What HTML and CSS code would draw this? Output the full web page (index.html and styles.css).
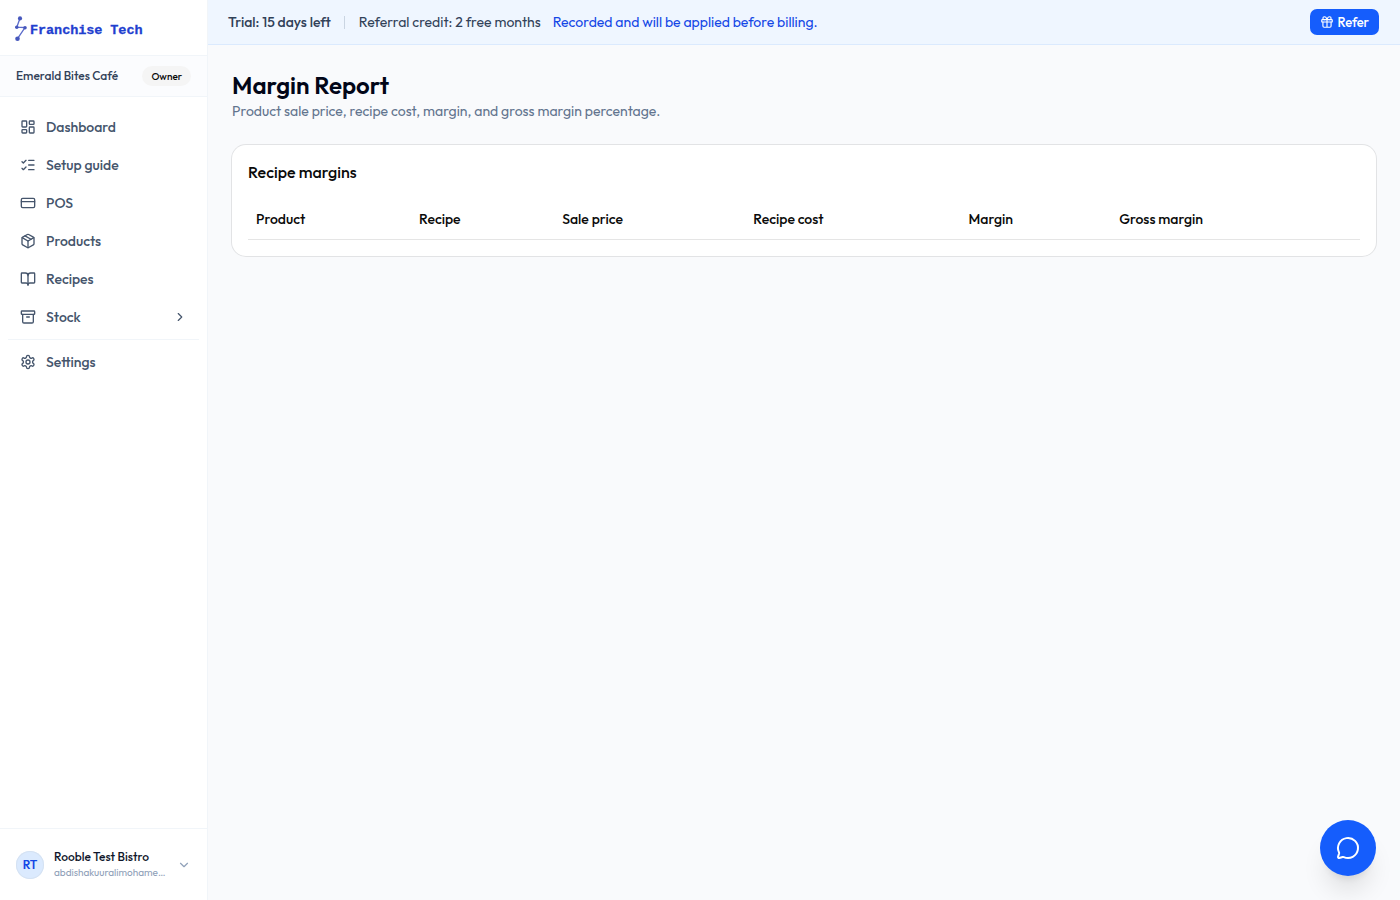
FILE: index.html
```html
<!DOCTYPE html>
<html lang="en">
<head>
  <meta charset="UTF-8" />
  <meta name="viewport" content="width=device-width, initial-scale=1.0"/>
  <title>Margin Report - Franchise Tech</title>
  <link rel="stylesheet" href="styles.css">
</head>
<body>

  <aside class="sidebar">
    <div class="brand">
      <svg class="brand-mark" viewBox="0 0 14 28">
        <path d="M6 3.2 2.8 12.200 11 12.700 3.500 23.700" fill="none" stroke="#5b6bca" stroke-width="1.3"/>
        <circle cx="6" cy="3.400" r="2.1"/>
        <circle cx="2.800" cy="12.200" r="1.8"/>
        <circle cx="11" cy="12.700" r="1.8"/>
        <circle cx="3.500" cy="23.700" r="2.3"/>
      </svg>
      <span class="brand-name">Franchise Tech</span>
    </div>

    <div class="branch">
      <span class="branch-name">Emerald Bites Café</span>
      <span class="badge">Owner</span>
    </div>

    <nav class="nav">
      <a href="#" class="nav-item">
        <svg class="icon" viewBox="0 0 24 24"><rect width="7" height="9" x="3" y="3" rx="1"/><rect width="7" height="5" x="14" y="3" rx="1"/><rect width="7" height="9" x="14" y="12" rx="1"/><rect width="7" height="5" x="3" y="16" rx="1"/></svg>
        <span>Dashboard</span>
      </a>
      <a href="#" class="nav-item">
        <svg class="icon" viewBox="0 0 24 24"><path d="M13 5h8M13 12h8M13 19h8M3 17l2 2 4-4M3 7l2 2 4-4"/></svg>
        <span>Setup guide</span>
      </a>
      <a href="#" class="nav-item">
        <svg class="icon" viewBox="0 0 24 24"><rect width="20" height="14" x="2" y="5" rx="2"/><path d="M2 10h20"/></svg>
        <span>POS</span>
      </a>
      <a href="#" class="nav-item">
        <svg class="icon" viewBox="0 0 24 24"><path d="M11 21.73a2 2 0 0 0 2 0l7-4A2 2 0 0 0 21 16V8a2 2 0 0 0-1-1.73l-7-4a2 2 0 0 0-2 0l-7 4A2 2 0 0 0 3 8v8a2 2 0 0 0 1 1.73z"/><path d="M12 22V12"/><path d="M3.29 7 12 12l8.71-5"/><path d="m7.5 4.27 9 5.15"/></svg>
        <span>Products</span>
      </a>
      <a href="#" class="nav-item">
        <svg class="icon" viewBox="0 0 24 24"><path d="M12 7v14"/><path d="M3 18a1 1 0 0 1-1-1V4a1 1 0 0 1 1-1h5a4 4 0 0 1 4 4 4 4 0 0 1 4-4h5a1 1 0 0 1 1 1v13a1 1 0 0 1-1 1h-6a3 3 0 0 0-3 3 3 3 0 0 0-3-3z"/></svg>
        <span>Recipes</span>
      </a>
      <a href="#" class="nav-item">
        <svg class="icon" viewBox="0 0 24 24"><rect width="20" height="5" x="2" y="3" rx="1"/><path d="M4 8v11a2 2 0 0 0 2 2h12a2 2 0 0 0 2-2V8"/><path d="M10 12h4"/></svg>
        <span>Stock</span>
        <svg class="icon chevron" viewBox="0 0 24 24"><path d="m9 18 6-6-6-6"/></svg>
      </a>
      <hr class="nav-divider">
      <a href="#" class="nav-item">
        <svg class="icon" viewBox="0 0 24 24"><path d="M12.22 2h-.44a2 2 0 0 0-2 2v.18a2 2 0 0 1-1 1.73l-.43.25a2 2 0 0 1-2 0l-.15-.08a2 2 0 0 0-2.73.73l-.22.38a2 2 0 0 0 .73 2.73l.15.1a2 2 0 0 1 1 1.72v.51a2 2 0 0 1-1 1.74l-.15.09a2 2 0 0 0-.73 2.73l.22.38a2 2 0 0 0 2.73.73l.15-.08a2 2 0 0 1 2 0l.43.25a2 2 0 0 1 1 1.73V20a2 2 0 0 0 2 2h.44a2 2 0 0 0 2-2v-.18a2 2 0 0 1 1-1.73l.43-.25a2 2 0 0 1 2 0l.15.08a2 2 0 0 0 2.73-.73l.22-.39a2 2 0 0 0-.73-2.73l-.15-.08a2 2 0 0 1-1-1.74v-.5a2 2 0 0 1 1-1.74l.15-.09a2 2 0 0 0 .73-2.73l-.22-.38a2 2 0 0 0-2.73-.73l-.15.08a2 2 0 0 1-2 0l-.43-.25a2 2 0 0 1-1-1.73V4a2 2 0 0 0-2-2z"/><circle cx="12" cy="12" r="3"/></svg>
        <span>Settings</span>
      </a>
    </nav>

    <div class="account">
      <span class="avatar">RT</span>
      <div class="account-text">
        <div class="account-name">Rooble Test Bistro</div>
        <div class="account-mail">abdishakuuralimohame…</div>
      </div>
      <svg class="icon account-chevron" viewBox="0 0 24 24"><path d="m6 9 6 6 6-6"/></svg>
    </div>
  </aside>

  <div class="page">
    <div class="trial-bar">
      <strong class="trial-days">Trial: 15 days left</strong>
      <span class="trial-sep"></span>
      <span class="trial-credit">Referral credit: 2 free months</span>
      <span class="trial-note">Recorded and will be applied before billing.</span>
      <button type="button" class="refer-btn">
        <svg class="icon" viewBox="0 0 24 24"><rect x="3" y="8" width="18" height="4" rx="1"/><path d="M12 8v13M19 12v7a2 2 0 0 1-2 2H7a2 2 0 0 1-2-2v-7M7.5 8a2.5 2.5 0 0 1 0-5A4.8 8 0 0 1 12 8a4.8 8 0 0 1 4.500-5 2.5 2.5 0 0 1 0 5"/></svg>
        <span>Refer</span>
      </button>
    </div>

    <main class="content">
      <h1>Margin Report</h1>
      <p class="subtitle">Product sale price, recipe cost, margin, and gross margin percentage.</p>

      <section class="card">
        <h2>Recipe margins</h2>
        <table class="margins">
          <thead>
            <tr>
              <th class="col-product">Product</th>
              <th class="col-recipe">Recipe</th>
              <th class="col-price">Sale price</th>
              <th class="col-cost">Recipe cost</th>
              <th class="col-margin">Margin</th>
              <th class="col-gross">Gross margin</th>
            </tr>
          </thead>
          <tbody></tbody>
        </table>
      </section>
    </main>
  </div>

  <button type="button" class="chat-btn" aria-label="Chat">
    <svg class="icon" viewBox="0 0 24 24"><path d="M2.992 16.342a2 2 0 0 1 .094 1.167l-1.065 3.290a1 1 0 0 0 1.236 1.168l3.413-.998a2 2 0 0 1 1.099.092 10 10 0 1 0-4.777-4.719"/></svg>
  </button>

</body>
</html>
```
FILE: styles.css
```css
:root {
  --bg: #f9fafc;
  --line: #f1f5f9;
  --blue: #155dfc;
  --blue-dark: #1447e6;
  --slate: #45556c;
  --muted: #62748e;
  --text: #0a0a0a;
}
* { box-sizing: border-box; margin: 0; padding: 0; }
body {
  display: flex; height: 100vh;
  background: var(--bg); color: var(--text);
  font-family: Outfit, Lato, sans-serif; font-size: 14px; line-height: 20px;
  white-space: nowrap; overflow: hidden;
}
button { border: none; font-family: inherit; cursor: pointer; }
.icon {
  width: 16px; height: 16px; flex: none; overflow: visible;
  fill: none; stroke: currentColor; stroke-width: 2;
  stroke-linecap: round; stroke-linejoin: round;
}

/* sidebar */
.sidebar {
  width: 208px; flex: none; display: flex; flex-direction: column;
  background: #fff; border-right: 1px solid var(--line);
}
.brand {
  display: flex; align-items: center; height: 56px; padding: 2px 0 0 14px;
  border-bottom: 1px solid var(--line);
}
.brand-mark { width: 14px; height: 28px; fill: #4657bd; }
.brand-name {
  margin: 3px 0 0 2px; color: #1f40cf;
  font: bold 13.5px "Liberation Mono", monospace;
  letter-spacing: -.07px; -webkit-text-stroke: .3px #1f40cf;
}
.branch {
  display: flex; align-items: center; justify-content: space-between;
  height: 41px; padding: 0 16px; background: #fbfcfe;
  border-bottom: 1px solid var(--line);
}
.branch-name { color: #314158; font-size: 12px; font-weight: 500; }
.badge {
  height: 20px; padding: 1px 9px 0; border-radius: 10px;
  background: #f5f5f5; font-size: 10px; font-weight: 500; line-height: 20px;
}
.nav { flex: 1; display: flex; flex-direction: column; gap: 2px; padding: 12px 8px; }
.nav-item {
  display: flex; align-items: center; gap: 10px; height: 36px; padding: 0 12px;
  color: var(--slate); font-weight: 500; text-decoration: none;
}
.chevron { width: 14px; height: 14px; margin-left: auto; }
.nav-divider { margin: 2px 0; border: none; border-top: 1px solid var(--line); }
.account {
  display: flex; align-items: center; height: 72px; padding: 0 16px;
  border-top: 1px solid var(--line);
}
.avatar {
  width: 28px; height: 28px; flex: none; border-radius: 50%;
  background: #dbeafe; box-shadow: inset 0 0 0 1px #d5e2f2;
  color: var(--blue-dark); font-size: 12px; font-weight: 600; line-height: 28px; text-align: center;
}
.account-text { flex: 1; margin-left: 10px; }
.account-name { color: #0f172b; font-size: 12px; font-weight: 500; line-height: 16px; }
.account-mail { color: #90a1b9; font-size: 10px; line-height: 15px; }
.account-chevron { width: 14px; height: 14px; color: #90a1b9; }

/* top bar */
.page { flex: 1; }
.trial-bar {
  display: flex; align-items: center; height: 45px; padding: 0 21px 1px 20px;
  background: #eff6ff; border-bottom: 1px solid #dbeafe; color: #314158;
}
.trial-days { font-weight: 500; }
.trial-sep { width: 1px; height: 13px; margin: 2px 14px 0 13px; background: #cad5e2; }
.trial-note { margin-left: 12px; color: var(--blue-dark); }
.refer-btn {
  display: flex; align-items: center; gap: 4px; height: 26px; margin-left: auto; padding: 1px 10px 0;
  background: var(--blue); border-radius: 7px; color: #fff; font-size: 13px; font-weight: 500;
}
.refer-btn .icon { width: 14px; height: 14px; margin-top: -1px; }
.refer-btn span { letter-spacing: -.1px; }

/* report */
.content { padding: 24px; }
h1 { height: 32px; color: #020618; font-size: 24px; font-weight: 600; line-height: 32px; }
.subtitle { color: var(--muted); }
.card {
  margin-top: 24px; padding: 16px; border-radius: 14px;
  background: #fff; box-shadow: 0 0 0 1px #e2e3e5;
}
h2 { font-size: 16px; font-weight: 500; line-height: 22px; }
.margins { width: 100%; margin-top: 16px; border-collapse: separate; border-spacing: 0; table-layout: fixed; }
.margins th {
  height: 41px; padding: 0 8px; border-bottom: 1px solid #e5e5e5;
  font-weight: 500; text-align: left;
}
.col-product { width: 163px; }
.col-recipe { width: 143.3px; }
.col-price { width: 191px; }
.col-cost { width: 215.2px; }
.col-margin { width: 150.7px; }

.chat-btn {
  position: fixed; right: 24px; bottom: 24px; display: grid; place-items: center;
  width: 56px; height: 56px; border-radius: 50%; background: var(--blue); color: #fff;
  box-shadow: 0 20px 25px -5px rgba(0, 0, 0, .1), 0 8px 10px -6px rgba(0, 0, 0, .1);
}
.chat-btn .icon { width: 24px; height: 24px; }
```
